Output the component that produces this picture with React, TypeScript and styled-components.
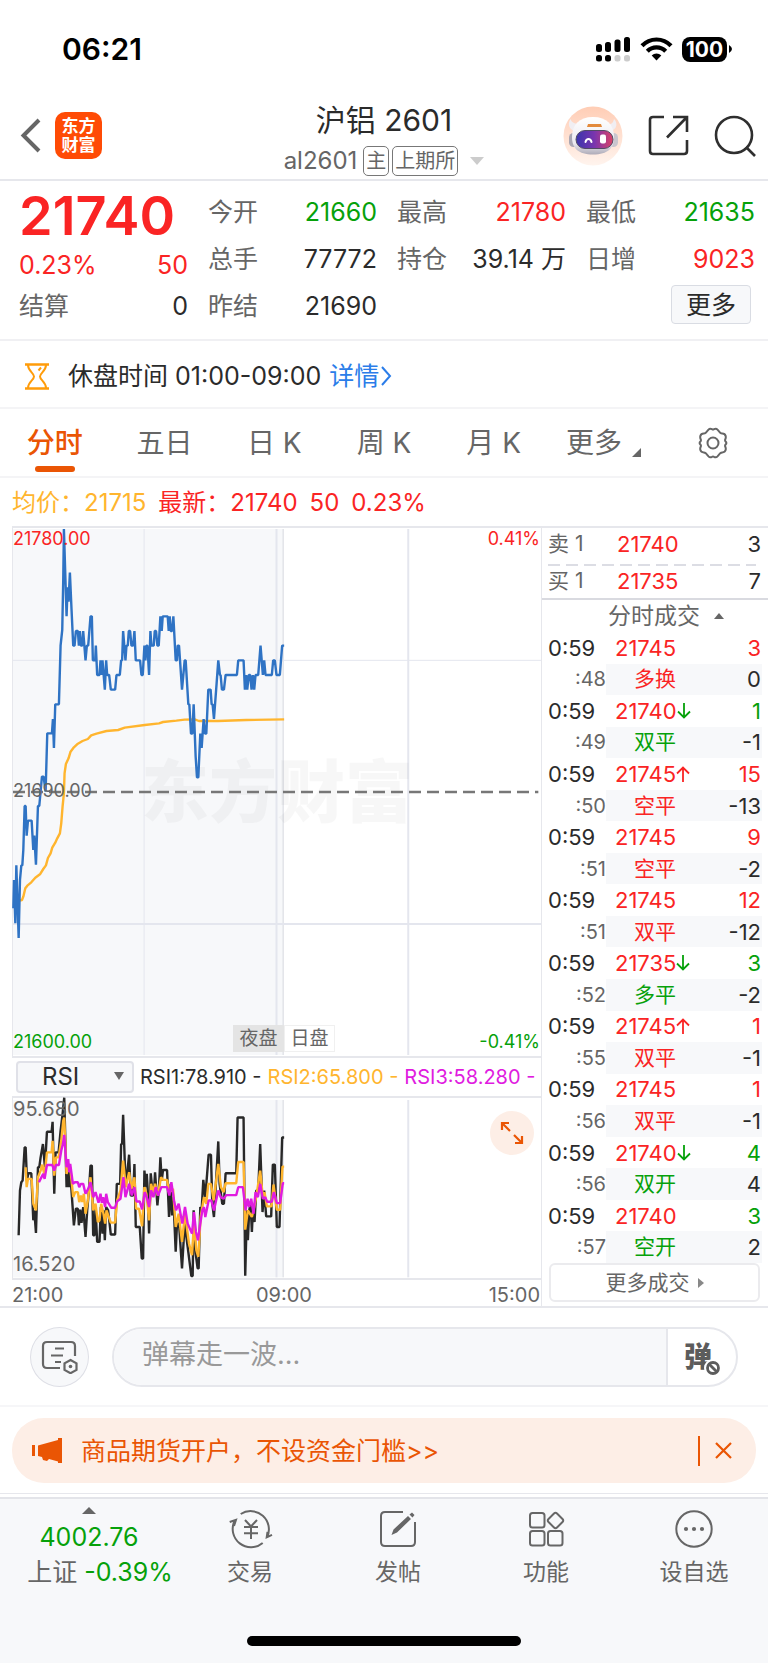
import React from "react";
import styled, { createGlobalStyle } from "styled-components";

const color = {
  red: "#fa2424",
  green: "#06a10a",
  ink: "#2b2b2b",
  gray: "#666666",
  line: "#e6e7ec",
  soft: "#f7f8fa",
  orange: "#ea5504",
  amber: "#ffb52e",
  magenta: "#e01be0",
  blue: "#2f73c4",
};

const GlobalStyle = createGlobalStyle`
  *, *::before, *::after { box-sizing: border-box; }
  body {
    margin: 0;
    background: #fff;
    color: ${color.ink};
    font-family: Inter, "Noto Sans CJK SC", sans-serif;
  }
  button, input, select { font: inherit; color: inherit; margin: 0; padding: 0; border: 0; background: none; }
  button { cursor: pointer; }
  a { color: inherit; text-decoration: none; }
  svg { display: block; }
`;

/* ---------- shared ---------- */

type Tone = "red" | "green" | "ink" | "gray" | "amber" | "magenta" | "blue";

const Tinted = styled.span<{ $tone: Tone }>`
  color: ${(p) => color[p.$tone]};
`;

const Page = styled.div`
  display: flex;
  flex-direction: column;
  min-height: 100vh;
`;

/* ---------- status bar ---------- */

const StatusBar = styled.div`
  display: flex;
  justify-content: space-between;
  align-items: center;
  height: 92px;
  padding: 6px 36px 0 62px;
  color: #000;
`;

const Clock = styled.time`
  font-size: 30px;
  line-height: 36px;
  font-weight: 600;
`;

const StatusIcons = styled.div`
  display: flex;
  align-items: center;
  gap: 9px;
`;

const Battery = styled.div`
  display: flex;
  align-items: center;
  gap: 1px;
`;

const BatteryLevel = styled.span`
  width: 45px;
  height: 25px;
  border-radius: 8px;
  background: #000;
  color: #fff;
  font-size: 21px;
  line-height: 25px;
  font-weight: 700;
  text-align: center;
`;

/* ---------- header ---------- */

const Header = styled.header`
  display: grid;
  grid-template-columns: 1fr auto 1fr;
  align-items: center;
  height: 89px;
  padding: 0 12px;
  border-bottom: 2px solid ${color.line};
`;

const HeaderStart = styled.div`
  display: flex;
  align-items: center;
  gap: 14px;
  padding-left: 8px;
`;

const Logo = styled.span`
  display: flex;
  flex-direction: column;
  justify-content: center;
  align-items: center;
  width: 47px;
  height: 47px;
  border-radius: 10px;
  background: #ff4b05;
  color: #fff;
  font-size: 17px;
  line-height: 19px;
  font-weight: 700;
`;

const HeaderTitle = styled.div`
  display: flex;
  flex-direction: column;
  align-items: center;
  padding-top: 4px;
`;

const Name = styled.h1`
  margin: 0;
  font-size: 30px;
  line-height: 42px;
  font-weight: 400;
`;

const Contract = styled.button`
  display: flex;
  align-items: center;
  gap: 3px;
  margin-top: 4px;
  color: ${color.gray};
  font-size: 24px;
  line-height: 32px;
`;

const Tag = styled.span`
  padding: 0 2px;
  border: 1px solid #777;
  border-radius: 5px;
  font-size: 20px;
  line-height: 28px;
`;

const ContractCode = styled.span`
  margin-right: 3px;
`;

const Caret = styled.svg`
  margin: 0 0 0 9px;
`;

const HeaderEnd = styled.div`
  display: flex;
  justify-content: flex-end;
  align-items: center;
  gap: 25px;
`;

/* ---------- quote summary ---------- */

const Quote = styled.section`
  display: grid;
  grid-template-columns: repeat(4, 1fr);
  grid-auto-rows: 47px;
  column-gap: 20px;
  padding: 8px 13px 9px 19px;
  border-bottom: 2px solid #f0f0f3;
  font-size: 25px;
  line-height: 47px;
`;

const Lead = styled.div`
  display: flex;
  grid-row: span 2;
  flex-direction: column;
  line-height: 44px;
`;

const LastPrice = styled.strong`
  color: ${color.red};
  font-size: 54px;
  line-height: 54px;
  font-weight: 600;
`;

const QuoteCell = styled.div`
  display: flex;
  justify-content: space-between;
  white-space: nowrap;
`;

const MoreQuote = styled.button`
  align-self: start;
  justify-self: end;
  grid-column: 4;
  width: 80px;
  height: 39px;
  margin: 2px 4px 0 0;
  border: 1px solid #d9dce3;
  border-radius: 4px;
  background: ${color.soft};
  line-height: 36px;
`;

/* ---------- notice ---------- */

const Notice = styled.div`
  display: flex;
  align-items: center;
  height: 68px;
  padding: 4px 24px 0;
  border-bottom: 2px solid #f4f4f6;
  font-size: 25px;
  line-height: 36px;
`;

const NoticeText = styled.span`
  margin: 0 8px 0 18px;
`;

const DetailLink = styled.a`
  display: flex;
  align-items: center;
  gap: 1px;
  color: #2b7de9;
`;

/* ---------- period tabs ---------- */

const Periods = styled.nav`
  display: grid;
  grid-template-columns: repeat(7, 1fr);
  height: 69px;
  border-bottom: 2px solid #f4f4f6;
`;

const Period = styled.button<{ $active?: boolean }>`
  position: relative;
  display: flex;
  justify-content: center;
  align-items: center;
  gap: 10px;
  color: ${(p) => (p.$active ? color.orange : color.gray)};
  font-size: 28px;
  line-height: 40px;
  font-weight: ${(p) => (p.$active ? 500 : 400)};

  &::after {
    content: "";
    display: ${(p) => (p.$active ? "block" : "none")};
    position: absolute;
    bottom: 4px;
    width: 40px;
    height: 6px;
    border-radius: 3px;
    background: ${color.orange};
  }
`;

const Corner = styled.svg`
  margin-top: 20px;
`;

const Averages = styled.div`
  display: flex;
  gap: 12px;
  height: 48px;
  padding: 0 12px;
  font-size: 24px;
  line-height: 49px;
`;

/* ---------- market: chart and trades ---------- */

const Market = styled.main`
  display: grid;
  grid-template-columns: 1fr 227px;
  border-bottom: 2px solid ${color.line};
`;

const Charts = styled.section`
  display: flex;
  flex-direction: column;
  min-width: 0;
  padding-left: 12px;
`;

const Plot = styled.div<{ $height: number; $labels: number }>`
  position: relative;
  height: ${(p) => p.$height}px;
  border: solid ${color.line};
  border-width: 2px 0 2px 1px;
  font-size: ${(p) => p.$labels}px;
  line-height: 22px;

  > svg {
    position: absolute;
    inset: 0;
    width: 100%;
    height: 100%;
    overflow: visible;
  }
  path, line { vector-effect: non-scaling-stroke; }
`;

const PlotLabel = styled.span<{ $tone: Tone; $at: "top" | "middle" | "bottom"; $end?: boolean }>`
  position: absolute;
  ${(p) => (p.$end ? "right: 1px;" : "left: 0;")}
  ${(p) =>
    p.$at === "top" ? "top: 0;" : p.$at === "bottom" ? "bottom: 3px;" : "top: calc(50% - 12px);"}
  color: ${(p) => color[p.$tone]};
`;

const Watermark = styled.span`
  position: absolute;
  top: 50%;
  left: 50%;
  transform: translate(-50%, -50%);
  color: rgba(0, 0, 0, 0.03);
  font-size: 68px;
  line-height: 68px;
  font-weight: 900;
  white-space: nowrap;
`;

const Sessions = styled.div`
  position: absolute;
  bottom: 4px;
  left: 220px;
  display: flex;
`;

const Session = styled.span<{ $night?: boolean }>`
  width: 51px;
  border: 1px solid ${(p) => (p.$night ? "#e4e4e4" : "#f0f0f0")};
  background: ${(p) => (p.$night ? "#e4e4e4" : "#fff")};
  color: ${color.gray};
  font-size: 19px;
  line-height: 25px;
  text-align: center;
`;

const Indicator = styled.div`
  display: flex;
  align-items: center;
  gap: 6px;
  height: 38px;
  padding-left: 4px;
  font-size: 20px;
  line-height: 24px;
  white-space: nowrap;
  overflow: hidden;
`;

const IndicatorPicker = styled.label`
  position: relative;
  display: block;
  flex: none;
  width: 118px;
  height: 32px;

  select {
    appearance: none;
    width: 100%;
    height: 100%;
    padding-left: 24px;
    border: 2px solid #e0e1e8;
    border-radius: 4px;
    background: ${color.soft};
    font-size: 24px;
    line-height: 28px;
  }
  svg {
    position: absolute;
    top: 11px;
    right: 10px;
    pointer-events: none;
  }
`;

const Expand = styled.button`
  position: absolute;
  top: 13px;
  right: 7px;
  display: grid;
  place-items: center;
  width: 44px;
  height: 44px;
  border-radius: 50%;
  background: #fdeee6;
`;

const TimeAxis = styled.div`
  display: grid;
  grid-template-columns: 40fr 23fr 37fr;
  height: 26px;
  padding-right: 1px;
  color: ${color.gray};
  font-size: 20px;
  line-height: 30px;

  :nth-child(2) { text-align: center; }
  :nth-child(3) { text-align: right; }
`;

const Trades = styled.section`
  display: flex;
  flex-direction: column;
  border: solid ${color.line};
  border-width: 2px 0 0 1px;
`;

const Book = styled.table`
  display: block;
  padding-bottom: 1px;
  border-bottom: 2px solid #d9dae0;
  font-size: 22px;
  line-height: 32px;

  tbody { display: block; }
  tr {
    display: grid;
    grid-template-columns: 69px 1fr auto;
    padding: 0 7px 0 6px;
  }
  tr + tr {
    margin-top: 4px;
    padding-top: 1px;
    background: repeating-linear-gradient(90deg, #dcdde4 0 12px, transparent 12px 18px) 6px 0 / 208px 2px no-repeat;
  }
  th, td { padding: 0; font-weight: 400; text-align: left; }
  th { font-size: 21px; }
`;

const TradesToggle = styled.button`
  display: flex;
  justify-content: center;
  align-items: center;
  gap: 14px;
  height: 32px;
  padding-left: 22px;
  color: ${color.gray};
  font-size: 23px;
  line-height: 32px;
`;

const TradeTable = styled.table`
  display: flex;
  flex: 1;
  font-size: 22px;

  tbody { display: flex; flex: 1; flex-direction: column; }
`;

const TradeRow = styled.tr<{ $detail?: boolean }>`
  display: grid;
  flex: 1;
  grid-template-columns: ${(p) => (p.$detail ? "58px" : "60px")} 1fr auto;
  align-items: center;
  height: 31px;
  margin: 0 6px;
  line-height: 30px;
  background: ${(p) =>
    p.$detail ? `linear-gradient(${color.soft}, ${color.soft}) 58px 0 no-repeat` : "none"};

  td { padding: 0; white-space: nowrap; }
  td:first-child {
    color: ${(p) => (p.$detail ? color.gray : color.ink)};
    font-size: ${(p) => (p.$detail ? 20 : 22)}px;
    text-align: ${(p) => (p.$detail ? "right" : "left")};
  }
  td:nth-child(2) {
    display: flex;
    align-items: center;
    padding-left: ${(p) => (p.$detail ? 28 : 7)}px;
    font-size: ${(p) => (p.$detail ? 21 : 22)}px;
  }
  td:last-child { padding-right: 1px; }
`;

const MoreTrades = styled.button`
  display: flex;
  justify-content: center;
  align-items: center;
  gap: 8px;
  height: 39px;
  margin: 0 8px 4px 7px;
  border: 2px solid #ebebee;
  border-radius: 6px;
  color: ${color.gray};
  font-size: 21px;
  line-height: 32px;
`;

/* ---------- comment bar ---------- */

const CommentBar = styled.form`
  display: flex;
  gap: 23px;
  padding: 19px 30px 18px;
  border-bottom: 2px solid #f6f6f8;
`;

const CommentSettings = styled.button`
  display: grid;
  flex: none;
  place-items: center;
  width: 59px;
  height: 60px;
  border: 1px solid #dedfe6;
  border-radius: 50%;
  background: ${color.soft};
`;

const CommentField = styled.div`
  display: flex;
  flex: 1;
  height: 60px;
  border: 2px solid ${color.line};
  border-radius: 30px;
  overflow: hidden;

  input {
    flex: 1;
    min-width: 0;
    padding: 0 28px 5px;
    background: ${color.soft};
    font-size: 27px;
    outline: none;
  }
  input::placeholder { color: #999; opacity: 1; }
`;

const BarrageToggle = styled.button`
  position: relative;
  width: 70px;
  border-left: 2px solid ${color.line};
  color: #5c5c5c;
  font-size: 28px;
  line-height: 50px;
  font-weight: 900;
  text-align: left;
  padding-left: 16px;

  svg {
    position: absolute;
    top: 30px;
    left: 36px;
  }
`;

/* ---------- promo ---------- */

const Promo = styled.aside`
  display: flex;
  align-items: center;
  height: 65px;
  margin: 11px 12px 14px;
  padding: 0 24px 0 20px;
  border-radius: 32px;
  background: #fdeee6;
  color: ${color.orange};

  a {
    flex: 1;
    margin-left: 19px;
    font-size: 25px;
    line-height: 36px;
  }
  button {
    padding-left: 15px;
    border-left: 2px solid ${color.orange};
    height: 30px;
  }
`;

/* ---------- bottom bar ---------- */

const BottomBar = styled.footer`
  display: flex;
  flex: 1;
  flex-direction: column;
  justify-content: space-between;
  align-items: center;
  padding-bottom: 17px;
  border-top: 2px solid #e3e4e9;
  background: ${color.soft};
  box-shadow: 0 -3px 0 0 #fff, 0 -4px 0 0 ${color.line};
`;

const BottomNav = styled.nav`
  display: grid;
  grid-template-columns: 176fr repeat(4, 148fr);
  width: 100%;
`;

const NavItem = styled.a`
  display: flex;
  flex-direction: column;
  align-items: center;
  gap: 7px;
  padding-top: 10px;
  color: ${color.gray};
  font-size: 23px;
  line-height: 32px;
`;

const IndexItem = styled.a`
  display: flex;
  flex-direction: column;
  align-items: center;
  gap: 3px;
  padding: 8px 0 0 24px;
  color: ${color.gray};
  font-size: 25px;
  line-height: 32px;
  white-space: nowrap;

  svg { margin: 0 22px 4px 0; }
  strong { margin-right: 22px; font-weight: 400; color: ${color.green}; }
`;

const HomeIndicator = styled.div`
  width: 274px;
  height: 10px;
  border-radius: 5px;
  background: #000;
`;

/* ---------- chart series ---------- */

const PRICE =
  "40,1195 42,1110 46,1240 49,1066 56,1284 60,1110 64,1066 67,1066 70,1020 74,888 77,888 80,977 84,932 95,932 100,1020 103,977 108,1064 114,888 118,888 126,800 131,800 137,845 142,670 156,670 159,627 162,714 166,583 177,583 182,407 187,360 190,210 192,57 200,319 203,232 206,275 210,188 215,300 220,407 224,407 228,363 234,363 237,407 240,363 243,407 247,407 250,363 257,451 261,407 265,407 272,319 276,319 279,451 286,451 288,407 292,495 299,495 302,451 305,495 308,451 315,539 319,451 322,495 328,495 333,539 346,539 350,495 360,495 364,451 367,451 370,363 377,451 380,407 384,407 387,363 391,363 395,407 400,407 404,363 408,451 421,451 425,495 429,495 434,407 437,451 440,407 443,407 448,495 452,363 455,407 462,407 465,363 469,363 473,407 477,407 482,319 486,363 489,319 504,319 507,363 510,319 513,363 517,363 521,319 528,451 532,451 534,407 538,407 547,539 555,451 558,451 566,583 569,583 574,671 578,671 582,583 588,740 592,802 596,802 602,671 606,714 612,627 616,671 620,671 626,539 633,539 636,583 639,583 643,627 651,520 656,451 661,495 663,495 667,539 673,539 678,495 712,495 716,451 732,451 736,539 740,495 743,539 748,495 752,495 756,539 760,495 764,539 768,495 776,495 783,407 790,495 794,451 798,495 817,495 821,451 826,451 831,495 841,495 848,407 854,407";
const AVERAGE =
  "58,1172 66,1170 70,1160 76,1135 82,1127 94,1117 106,1103 120,1093 130,1077 138,1066 144,1044 152,1030 157,1013 166,998 172,985 180,970 184,940 188,890 192,850 194,790 198,762 206,745 212,725 222,712 234,701 248,693 264,687 274,676 290,671 320,663 355,660 375,653 435,645 478,640 490,636 530,632 555,629 585,628 598,633 655,633 740,630 854,628";
const RSI1 =
  "56,675 60,540 64,515 68,510 74,410 77,410 81,510 85,488 94,488 100,630 103,600 108,668 114,470 118,470 122,440 129,400 135,470 141,363 155,363 158,333 163,550 167,425 176,425 182,360 188,310 193,260 200,530 204,480 207,530 210,470 222,645 228,595 234,595 237,645 241,598 245,638 250,590 257,680 262,600 268,530 272,465 276,465 280,675 284,675 287,590 292,695 299,695 303,590 308,670 311,600 315,690 319,590 325,600 333,673 346,673 351,520 361,520 364,400 367,400 370,312 377,510 382,490 388,432 393,555 400,555 404,460 408,650 420,650 426,745 430,745 434,480 438,530 441,490 444,540 448,670 453,488 458,540 463,540 466,485 473,585 478,530 482,440 486,510 490,478 502,478 508,620 513,520 517,615 521,560 528,725 532,640 538,640 547,775 555,640 564,710 575,798 579,798 582,600 588,730 594,775 597,775 602,590 606,600 611,508 617,560 627,432 634,432 638,580 643,620 650,500 656,392 660,520 668,580 673,580 678,488 710,488 714,320 732,320 737,797 742,600 745,690 749,600 753,580 757,665 760,600 765,635 770,540 776,540 782,400 789,605 794,540 800,618 815,618 820,462 826,462 832,650 840,650 848,380 854,380";
const RSI2 =
  "77,470 80,530 84,505 95,505 100,580 108,600 114,500 122,480 127,462 134,495 141,425 155,425 158,390 163,495 168,440 176,440 184,390 190,330 193,320 200,490 206,460 212,480 220,560 226,545 234,545 238,575 243,555 247,575 252,550 257,610 264,570 272,500 280,600 287,580 294,635 299,630 304,580 311,610 316,640 320,600 333,637 346,637 352,570 362,540 370,450 378,530 388,485 395,535 404,500 409,595 418,595 427,648 434,530 440,550 448,630 454,520 460,545 466,520 474,555 484,500 490,508 502,508 508,545 516,540 520,535 528,650 537,610 547,695 556,610 568,700 577,735 583,640 590,720 596,740 603,620 613,560 620,580 626,520 634,520 642,570 656,460 664,530 672,545 678,518 710,518 716,454 732,454 737,658 745,600 757,620 764,590 770,560 782,480 790,560 795,545 802,588 816,588 822,522 832,598 842,598 849,468 854,468";
const RSI3 =
  "117,515 122,505 130,490 134,505 141,463 157,463 163,480 168,463 177,463 184,420 189,400 193,372 200,470 205,445 208,485 211,460 219,520 225,515 234,515 238,530 243,520 250,520 257,550 265,535 272,515 280,560 287,545 296,577 302,550 306,577 310,560 316,590 319,550 324,575 334,592 346,592 352,573 362,565 371,500 377,560 388,520 396,555 404,530 410,573 420,573 427,597 435,545 441,560 448,590 454,540 461,560 468,530 475,555 485,530 502,530 509,555 515,515 523,570 529,600 537,580 548,640 556,590 564,640 577,670 583,605 589,665 595,690 602,640 608,600 613,590 617,620 627,570 635,570 643,600 656,540 663,560 672,565 680,554 710,554 716,530 730,530 738,600 744,565 749,590 755,565 762,610 768,545 775,560 782,520 790,565 797,560 803,574 817,574 823,545 832,578 842,578 850,518 854,518";

const Series = ({ points, stroke }: { points: string; stroke: string }) => (
  <path d={`M${points.split(" ").join("L")}`} fill="none" stroke={stroke} strokeWidth="2.400" strokeLinejoin="bevel" />
);

const Grid = ({ top, bottom }: { top: number; bottom: number }) => (
  <g stroke="#e4e6ee" strokeWidth="1">
    <rect x="39" y={top} width="811" height={bottom - top} fill={color.soft} stroke="none" />
    <line x1="433" x2="433" y1={top} y2={bottom} />
    <line x1="831" x2="831" y1={top} y2={bottom} strokeWidth="2" />
    <line x1="851" x2="851" y1={top} y2={bottom} stroke="#d6d7de" />
    <line x1="1227" x2="1227" y1={top} y2={bottom} strokeWidth="2" />
  </g>
);

/* ---------- data ---------- */

type QuoteEntry = { label: string; value: string; tone?: Tone; labelTone?: Tone };

const change: QuoteEntry = { label: "0.23%", value: "50", tone: "red", labelTone: "red" };

const quotes: QuoteEntry[] = [
  { label: "今开", value: "21660", tone: "green" },
  { label: "最高", value: "21780", tone: "red" },
  { label: "最低", value: "21635", tone: "green" },
  { label: "总手", value: "77772" },
  { label: "持仓", value: "39.14 万" },
  { label: "日增", value: "9023", tone: "red" },
  { label: "结算", value: "0" },
  { label: "昨结", value: "21690" },
];

type Trade = {
  price: string;
  move?: "up" | "down";
  volume: string;
  tone: Tone;
  second: string;
  kind: string;
  change: string;
};

const trades: Trade[] = [
  { price: "21745", volume: "3", tone: "red", second: ":48", kind: "多换", change: "0" },
  { price: "21740", move: "down", volume: "1", tone: "green", second: ":49", kind: "双平", change: "-1" },
  { price: "21745", move: "up", volume: "15", tone: "red", second: ":50", kind: "空平", change: "-13" },
  { price: "21745", volume: "9", tone: "red", second: ":51", kind: "空平", change: "-2" },
  { price: "21745", volume: "12", tone: "red", second: ":51", kind: "双平", change: "-12" },
  { price: "21735", move: "down", volume: "3", tone: "green", second: ":52", kind: "多平", change: "-2" },
  { price: "21745", move: "up", volume: "1", tone: "red", second: ":55", kind: "双平", change: "-1" },
  { price: "21745", volume: "1", tone: "red", second: ":56", kind: "双平", change: "-1" },
  { price: "21740", move: "down", volume: "4", tone: "green", second: ":56", kind: "双开", change: "4" },
  { price: "21740", volume: "3", tone: "green", second: ":57", kind: "空开", change: "2" },
];

/* ---------- icons ---------- */

const Triangle = ({ d, w, h, fill = color.gray }: { d: string; w: number; h: number; fill?: string }) => (
  <svg width={w} height={h} viewBox={`0 0 ${w} ${h}`} aria-hidden="true">
    <path d={d} fill={fill} />
  </svg>
);

const MoveArrow = ({ up }: { up: boolean }) => (
  <svg width="14" height="18" viewBox="0 0 14 18" fill="none" stroke={up ? color.red : color.green} strokeWidth="1.800" aria-hidden="true">
    {up ? <path d="M7 17V2.500M1 8.500l6-6 6 6" /> : <path d="M7 1v14.500M1 9.500l6 6 6-6" />}
  </svg>
);

const SignalIcon = () => (
  <svg width="35" height="26" viewBox="0 0 35 26" aria-hidden="true">
    <rect x="0" y="8" width="6" height="8" rx="2.500" />
    <rect x="9" y="6" width="6" height="10" rx="2.500" />
    <rect x="18.500" y="3.500" width="6" height="12.500" rx="2.500" />
    <rect x="28" y="1" width="6" height="15" rx="2.500" />
    <rect x="0" y="19" width="6" height="6.500" rx="2.500" />
    <rect x="9" y="19" width="6" height="6.500" rx="2.500" />
    <rect x="18.500" y="19" width="6" height="6.500" rx="2.500" fill="#ccc" />
    <rect x="28" y="19" width="6" height="6.500" rx="2.500" fill="#ccc" />
  </svg>
);

const WifiIcon = () => (
  <svg width="33" height="24" viewBox="0 0 33 24" fill="none" stroke="#000" strokeWidth="4.200" aria-hidden="true">
    <path d="M2 8.700C10 .4 23 .4 31 8.700" />
    <path d="M7.300 14.300c5-5.200 13.400-5.200 18.400 0" />
    <path d="M11.700 18.600c2.600-2.800 7-2.800 9.600 0L16.500 23.500z" fill="#000" stroke="none" />
  </svg>
);

const RobotIcon = () => (
  <svg width="60" height="60" viewBox="0 0 60 60" aria-hidden="true">
    <defs>
      <linearGradient id="halo" x1="0" y1="0" x2="0" y2="1">
        <stop offset="0" stopColor="#ffcdb5" />
        <stop offset="1" stopColor="#fff4ee" />
      </linearGradient>
      <linearGradient id="visor" x1="0" y1="0" x2="1" y2="0">
        <stop offset="0" stopColor="#3a35ad" />
        <stop offset=".5" stopColor="#7a35ae" />
        <stop offset="1" stopColor="#dc4266" />
      </linearGradient>
      <linearGradient id="shell" x1="0" y1="0" x2="0" y2="1">
        <stop offset="0" stopColor="#fff" />
        <stop offset=".7" stopColor="#eceaf0" />
        <stop offset="1" stopColor="#aeabb8" />
      </linearGradient>
    </defs>
    <circle cx="30" cy="30" r="29.500" fill="url(#halo)" />
    <path d="M11 25c-6-3-6-8-3.500-12 1 4 5 5 10 5zM48 25c6-2 7-8 3-12-1 5-4 6-9 5z" fill="#f1eef2" />
    <rect x="6" y="27" width="9" height="14" rx="4.500" fill="#aaa7b3" />
    <rect x="46" y="27" width="9" height="14" rx="4.500" fill="#c9c6ce" />
    <path d="M30 11c14 0 21 8 21 20 0 11-6 17.500-21 17.500S9 42 9 31c0-12 7-20 21-20z" fill="url(#shell)" />
    <path d="M25 18h13l1 3H24z" fill="#e38a3c" />
    <rect x="13" y="24.500" width="37" height="18" rx="9" fill="url(#visor)" stroke="#514b64" />
    <path d="M22.500 36c1-4 5-4 6 0" fill="none" stroke="#fff" strokeWidth="2" strokeLinecap="round" />
    <rect x="37" y="28.500" width="6" height="9" rx="2" fill="#fff" />
  </svg>
);

const ShareIcon = () => (
  <svg width="41" height="41" viewBox="0 0 41 41" fill="none" stroke="#2f2f2f" strokeWidth="2.600" aria-hidden="true">
    <path d="M16 2H5Q2 2 2 5v31q0 3 3 3h31q3 0 3-3V25" />
    <path d="M25 2h14v15M39 2L19 22.500" />
  </svg>
);

const SearchIcon = () => (
  <svg width="42" height="42" viewBox="0 0 42 42" fill="none" stroke="#2f2f2f" strokeWidth="2.600" aria-hidden="true">
    <circle cx="20" cy="20" r="18" />
    <path d="M32 32l9 9" />
  </svg>
);

const HourglassIcon = () => (
  <svg width="26" height="27" viewBox="0 0 26 27" fill="none" stroke="#ff9c0a" strokeWidth="2" aria-hidden="true">
    <path d="M1 1.500h24M1 25.500h24" strokeWidth="2.400" />
    <path d="M4 2c0 6 6 8 6 11.500S4 19 4 25M22 2c0 6-6 8-6 11.500S22 19 22 25M14.500 7.500L17 4.500" />
  </svg>
);

const GearIcon = () => (
  <svg width="34" height="32" viewBox="0 0 34 32" fill="none" stroke={color.gray} strokeWidth="2" strokeLinejoin="round" aria-hidden="true">
    <path d="M12.500 2.600Q14 1 16 2.200q1 .7 2 0Q20 1 21.500 2.600l2.800 3.200q.8.800 2 .8 2.700 0 3.300 2.300.5 1.700-.3 3.300-.6 1.200.3 2.300 1.600 1.500 0 3-.9 1.100-.3 2.300.8 1.600.3 3.300-.6 2.300-3.300 2.300-1.200 0-2 .8l-2.800 3.200Q20 31 18 29.800q-1-.7-2 0Q14 31 12.500 29.400L9.700 26.200q-.8-.8-2-.8-2.700 0-3.300-2.300-.5-1.700.3-3.300.6-1.200-.3-2.300-1.600-1.500 0-3 .9-1.100.3-2.300-.8-1.600-.3-3.300.6-2.300 3.300-2.300 1.200 0 2-.8z" />
    <circle cx="17" cy="16" r="5.500" />
  </svg>
);

const CommentSettingsIcon = () => (
  <svg width="38" height="34" viewBox="0 0 38 34" fill="none" stroke={color.gray} strokeWidth="2.200" aria-hidden="true">
    <path d="M19 28H6q-4 0-4-4V6q0-4 4-4h24q4 0 4 4v10M14 8.500h9M10 15.500h12M14 22h6" />
    <path d="M29.500 20l6 3.300v6.600l-6 3.300-6-3.300v-6.600z" />
    <circle cx="29.500" cy="26.500" r="1.800" fill={color.gray} stroke="none" />
  </svg>
);

const HornIcon = () => (
  <svg width="30" height="27" viewBox="0 0 30 27" fill={color.orange} aria-hidden="true">
    <path d="M0 8h3v11H0zM6 8.500L26 3V1h4v25h-4v-1.500l-9-2.500-2 2-4-1-1-3-4-1z" />
  </svg>
);

const navIcon = {
  width: 42,
  height: 40,
  viewBox: "0 0 42 40",
  overflow: "visible",
  fill: "none",
  stroke: color.gray,
  strokeWidth: 2,
};

const TradeIcon = () => (
  <svg {...navIcon} aria-hidden="true">
    <path d="M11.700 5A18.300 18.300 0 0 1 38 28.500M33.700 34A18.300 18.300 0 0 1 5.500 12M.7 13L7 10.800 5 17M43 25.800l-5.300 2.500.8-5.500" />
    <path d="M16 11l6 6.500 6-6.500M22 17.500V30M15 18h14M15 24.300h14" />
  </svg>
);

const PostIcon = () => (
  <svg {...navIcon} aria-hidden="true">
    <path d="M26 3H8Q4 3 4 7v26q0 4 4 4h26q4 0 4-4V13" />
    <path d="M14.500 26l2-5.500L31 7l3 3-14 13.500zM32.500 5.500l2.500-2 2.500 2.500-2 2.500z" fill={color.gray} stroke="none" />
  </svg>
);

const FunctionIcon = () => (
  <svg {...navIcon} aria-hidden="true">
    <rect x="5" y="4" width="14.500" height="14.500" rx="2.500" />
    <rect x="5" y="22" width="14.500" height="14.500" rx="2.500" />
    <rect x="23" y="22" width="14.500" height="14.500" rx="2.500" />
    <path d="M29 4.500q1.500-1.500 3 0l5.500 5.500q1.500 1.500 0 3L32 18.500q-1.500 1.500-3 0L23.500 13q-1.500-1.500 0-3z" />
  </svg>
);

const MoreIcon = () => (
  <svg {...navIcon} aria-hidden="true">
    <circle cx="21" cy="20" r="17.700" />
    <g fill={color.gray} stroke="none">
      <circle cx="13" cy="20" r="2.100" />
      <circle cx="21" cy="20" r="2.100" />
      <circle cx="29" cy="20" r="2.100" />
    </g>
  </svg>
);

/* ---------- sections ---------- */

const PriceChart = () => (
  <Plot $height={532} $labels={18}>
    <svg viewBox="39 54 1587 1584" preserveAspectRatio="none" aria-hidden="true">
      <Grid top={57} bottom={1635} />
      <g stroke="#e4e6ee" strokeWidth="1">
        <line x1="39" x2="1626" y1="451" y2="451" />
        <line x1="39" x2="1626" y1="1242" y2="1242" strokeWidth="2" />
      </g>
    </svg>
    <Watermark>东方财富</Watermark>
    <svg viewBox="39 54 1587 1584" preserveAspectRatio="none" role="img" aria-label="分时走势">
      <line x1="39" x2="1618" y1="846" y2="846" stroke="#777" strokeWidth="2.400" strokeDasharray="12 6" />
      <Series points={AVERAGE} stroke={color.amber} />
      <Series points={PRICE} stroke={color.blue} />
    </svg>
    <PlotLabel $tone="red" $at="top">21780.00</PlotLabel>
    <PlotLabel $tone="red" $at="top" $end>0.41%</PlotLabel>
    <PlotLabel $tone="gray" $at="middle">21690.00</PlotLabel>
    <PlotLabel $tone="green" $at="bottom">21600.00</PlotLabel>
    <PlotLabel $tone="green" $at="bottom" $end>-0.41%</PlotLabel>
    <Sessions>
      <Session $night>夜盘</Session>
      <Session>日盘</Session>
    </Sessions>
  </Plot>
);

const RsiChart = () => (
  <Plot $height={184} $labels={20}>
    <svg viewBox="39 261 1587 543" preserveAspectRatio="none" role="img" aria-label="RSI">
      <Grid top={267} bottom={802} />
      <Series points={RSI1} stroke="#282828" />
      <Series points={RSI2} stroke={color.amber} />
      <Series points={RSI3} stroke={color.magenta} />
    </svg>
    <PlotLabel $tone="gray" $at="top">95.680</PlotLabel>
    <PlotLabel $tone="gray" $at="bottom">16.520</PlotLabel>
    <Expand aria-label="全屏">
      <svg width="24" height="24" viewBox="0 0 24 24" fill="none" stroke={color.orange} strokeWidth="2.200" aria-hidden="true">
        <path d="M9 2H2v7M2 2l8 8M15 22h7v-7M22 22l-8-8" />
      </svg>
    </Expand>
  </Plot>
);

const QuoteItem = ({ item }: { item: QuoteEntry }) => (
  <QuoteCell>
    <Tinted $tone={item.labelTone ?? "gray"}>{item.label}</Tinted>
    <Tinted $tone={item.tone ?? "ink"}>{item.value}</Tinted>
  </QuoteCell>
);

export default function App() {
  return (
    <Page>
      <GlobalStyle />
      <StatusBar>
        <Clock>06:21</Clock>
        <StatusIcons>
          <SignalIcon />
          <WifiIcon />
          <Battery>
            <BatteryLevel>100</BatteryLevel>
            <Triangle d="M1 0Q4 2 4 4T1 8z" w={4} h={8} fill="#000" />
          </Battery>
        </StatusIcons>
      </StatusBar>

      <Header>
        <HeaderStart>
          <button aria-label="返回">
            <svg width="21" height="35" viewBox="0 0 21 35" fill="none" stroke={color.gray} strokeWidth="4" aria-hidden="true">
              <path d="M19 2L3.500 17.500 19 33" />
            </svg>
          </button>
          <Logo>
            <span>东方</span>
            <span>财富</span>
          </Logo>
        </HeaderStart>
        <HeaderTitle>
          <Name>沪铝 2601</Name>
          <Contract>
            <ContractCode>al2601</ContractCode>
            <Tag>主</Tag>
            <Tag>上期所</Tag>
            <Caret width="14" height="8" viewBox="0 0 14 8" aria-hidden="true">
              <path d="M0 0h14L7 8z" fill="#ccc" />
            </Caret>
          </Contract>
        </HeaderTitle>
        <HeaderEnd>
          <button aria-label="智能助手"><RobotIcon /></button>
          <button aria-label="分享"><ShareIcon /></button>
          <button aria-label="搜索"><SearchIcon /></button>
        </HeaderEnd>
      </Header>

      <Quote>
        <Lead>
          <LastPrice>21740</LastPrice>
          <QuoteItem item={change} />
        </Lead>
        {quotes.map((item) => (
          <QuoteItem key={item.label} item={item} />
        ))}
        <MoreQuote>更多</MoreQuote>
      </Quote>

      <Notice>
        <HourglassIcon />
        <NoticeText>休盘时间 01:00-09:00</NoticeText>
        <DetailLink href="#rest">
          详情
          <svg width="12" height="20" viewBox="0 0 12 20" fill="none" stroke="currentColor" strokeWidth="2" aria-hidden="true">
            <path d="M2 1l8 9-8 9" />
          </svg>
        </DetailLink>
      </Notice>

      <Periods>
        <Period $active>分时</Period>
        <Period>五日</Period>
        <Period>日 K</Period>
        <Period>周 K</Period>
        <Period>月 K</Period>
        <Period>
          更多
          <Corner width="9" height="9" viewBox="0 0 9 9" aria-hidden="true">
            <path d="M9 0v9H0z" fill={color.gray} />
          </Corner>
        </Period>
        <Period aria-label="设置"><GearIcon /></Period>
      </Periods>

      <Averages>
        <Tinted $tone="amber">均价：21715</Tinted>
        <Tinted $tone="red">最新：21740</Tinted>
        <Tinted $tone="red">50</Tinted>
        <Tinted $tone="red">0.23%</Tinted>
      </Averages>

      <Market>
        <Charts>
          <PriceChart />
          <Indicator>
            <IndicatorPicker>
              <select aria-label="指标" defaultValue="RSI">
                <option>RSI</option>
              </select>
              <Triangle d="M0 0h10L5 8z" w={10} h={8} />
            </IndicatorPicker>
            <Tinted $tone="ink">RSI1:78.910 -</Tinted>
            <Tinted $tone="amber">RSI2:65.800 -</Tinted>
            <Tinted $tone="magenta">RSI3:58.280 -</Tinted>
          </Indicator>
          <RsiChart />
          <TimeAxis>
            <span>21:00</span>
            <span>09:00</span>
            <span>15:00</span>
          </TimeAxis>
        </Charts>

        <Trades>
          <Book>
            <tbody>
              <tr>
                <th scope="row"><Tinted $tone="gray">卖 1</Tinted></th>
                <td><Tinted $tone="red">21740</Tinted></td>
                <td>3</td>
              </tr>
              <tr>
                <th scope="row"><Tinted $tone="gray">买 1</Tinted></th>
                <td><Tinted $tone="red">21735</Tinted></td>
                <td>7</td>
              </tr>
            </tbody>
          </Book>
          <TradesToggle>
            分时成交
            <Triangle d="M0 6L5 0l5 6z" w={10} h={6} />
          </TradesToggle>
          <TradeTable>
            <tbody>
              {trades.map((t, i) => (
                <React.Fragment key={i}>
                  <TradeRow>
                    <td>0:59</td>
                    <td>
                      <Tinted $tone="red">{t.price}</Tinted>
                      {t.move && <MoveArrow up={t.move === "up"} />}
                    </td>
                    <td><Tinted $tone={t.tone}>{t.volume}</Tinted></td>
                  </TradeRow>
                  <TradeRow $detail>
                    <td>{t.second}</td>
                    <td><Tinted $tone={t.tone}>{t.kind}</Tinted></td>
                    <td>{t.change}</td>
                  </TradeRow>
                </React.Fragment>
              ))}
            </tbody>
          </TradeTable>
          <MoreTrades>
            更多成交
            <Triangle d="M0 0l6 5-6 5z" w={6} h={10} fill="#888" />
          </MoreTrades>
        </Trades>
      </Market>

      <CommentBar>
        <CommentSettings type="button" aria-label="弹幕设置"><CommentSettingsIcon /></CommentSettings>
        <CommentField>
          <input aria-label="弹幕" placeholder="弹幕走一波..." />
          <BarrageToggle type="button">
            弹
            <svg width="18" height="18" viewBox="0 0 18 18" aria-hidden="true">
              <circle cx="9" cy="9" r="9" fill="#fff" />
              <circle cx="9" cy="9" r="5.500" fill="#fff" stroke="#5c5c5c" strokeWidth="2.800" />
              <path d="M5 5l8 8" stroke="#5c5c5c" strokeWidth="2.800" />
            </svg>
          </BarrageToggle>
        </CommentField>
      </CommentBar>

      <Promo>
        <HornIcon />
        <a href="#open">商品期货开户，不设资金门槛&gt;&gt;</a>
        <button aria-label="关闭">
          <svg width="17" height="17" viewBox="0 0 17 17" fill="none" stroke={color.orange} strokeWidth="2.200" aria-hidden="true">
            <path d="M1 1l15 15M16 1L1 16" />
          </svg>
        </button>
      </Promo>

      <BottomBar>
        <BottomNav>
          <IndexItem href="#index">
            <Triangle d="M0 7L7 0l7 7z" w={14} h={7} />
            <strong>4002.76</strong>
            <span>上证 <Tinted $tone="green">-0.39%</Tinted></span>
          </IndexItem>
          <NavItem href="#trade"><TradeIcon />交易</NavItem>
          <NavItem href="#post"><PostIcon />发帖</NavItem>
          <NavItem href="#functions"><FunctionIcon />功能</NavItem>
          <NavItem href="#watch"><MoreIcon />设自选</NavItem>
        </BottomNav>
        <HomeIndicator />
      </BottomBar>
    </Page>
  );
}
